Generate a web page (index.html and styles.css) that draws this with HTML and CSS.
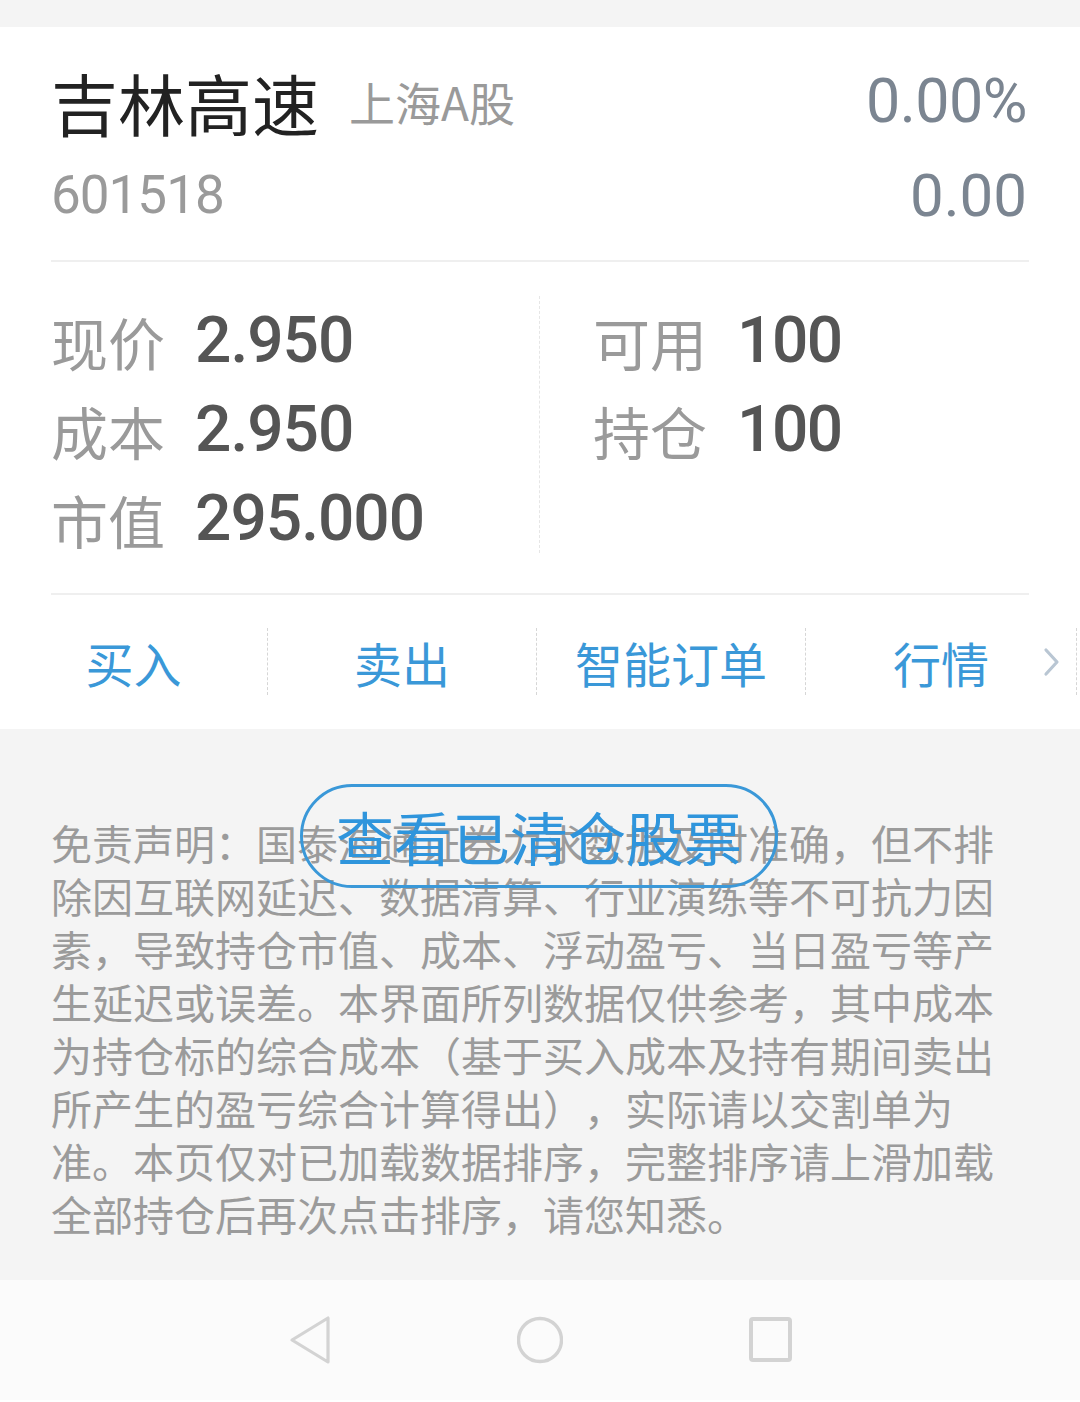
FILE: index.html
```html
<!DOCTYPE html>
<html lang="zh-CN">
<head>
    <meta charset="UTF-8">
    <meta name="viewport" content="width=device-width, initial-scale=1.0">
    <title>持仓详情</title>
    <link rel="stylesheet" href="styles.css">
</head>
<body>
    <div class="top-strip"></div>

    <div class="card">
        <div class="stock-head">
            <div class="head-row">
                <div class="stock-name">吉林高速<span class="market">上海A股</span></div>
                <div class="change-rate">0.00%</div>
            </div>
            <div class="head-row sub">
                <div class="stock-code">601518</div>
                <div class="change-value">0.00</div>
            </div>
        </div>

        <div class="stats">
            <div class="stats-col">
                <p class="stat"><span class="label">现价</span><span class="value">2.950</span></p>
                <p class="stat"><span class="label">成本</span><span class="value">2.950</span></p>
                <p class="stat"><span class="label">市值</span><span class="value">295.000</span></p>
            </div>
            <div class="stats-col right">
                <p class="stat"><span class="label">可用</span><span class="value">100</span></p>
                <p class="stat"><span class="label">持仓</span><span class="value">100</span></p>
            </div>
        </div>

        <div class="actions">
            <div class="action">买入</div>
            <div class="action">卖出</div>
            <div class="action">智能订单</div>
            <div class="action last">行情
                <svg class="chevron" width="18" height="30" viewBox="0 0 18 30">
                    <path d="M3 3 L14 15 L3 27" fill="none" stroke="#b9c6d3" stroke-width="3.2" stroke-linecap="round" stroke-linejoin="round"/>
                </svg>
            </div>
        </div>
    </div>

    <div class="disclaimer">
        <p class="disclaimer-text">免责声明：国泰海通证券力求数据及时准确，但不排除因互联网延迟、数据清算、行业演练等不可抗力因素，导致持仓市值、成本、浮动盈亏、当日盈亏等产生延迟或误差。本界面所列数据仅供参考，其中成本为持仓标的综合成本（基于买入成本及持有期间卖出所产生的盈亏综合计算得出），实际请以交割单为准。本页仅对已加载数据排序，完整排序请上滑加载全部持仓后再次点击排序，请您知悉。</p>
        <div class="cleared-btn">查看已清仓股票</div>
    </div>

    <div class="nav-bar">
        <svg class="nav-icon" width="46" height="50" viewBox="0 0 46 50">
            <path d="M41 3 L41 47 L5 25 Z" fill="none" stroke="#d3d3d3" stroke-width="3.2" stroke-linejoin="round"/>
        </svg>
        <svg class="nav-icon" width="46" height="50" viewBox="0 0 46 50">
            <circle cx="23" cy="25" r="21.5" fill="none" stroke="#d3d3d3" stroke-width="3.4"/>
        </svg>
        <svg class="nav-icon" width="46" height="50" viewBox="0 0 46 50">
            <rect x="4" y="4" width="39" height="41" rx="2" fill="none" stroke="#d3d3d3" stroke-width="4"/>
        </svg>
    </div>
</body>
</html>
```

FILE: styles.css
```css
body {
    margin: 0;
    width: 1080px;
    font-family: "Noto Sans CJK SC", "Noto Sans", sans-serif;
    background: #fff;
}
p {
    margin: 0;
}
.top-strip {
    height: 27px;
    background: #f4f4f4;
}
.card {
    background: #fff;
}
.stock-head {
    margin: 0 51px;
    padding: 38px 2px 35px 0;
    border-bottom: 2px solid #efefef;
}
.head-row {
    display: flex;
    justify-content: space-between;
    align-items: center;
    height: 72px;
}
.head-row.sub {
    margin-top: 28px;
    height: 60px;
}
.stock-name {
    font-size: 67px;
    color: #222;
    line-height: 72px;
}
.market {
    font-size: 46px;
    color: #9a9a9a;
    margin-left: 30px;
    vertical-align: 10px;
}
.change-rate,
.change-value {
    font-family: Roboto, sans-serif;
    color: #7b8591;
}
.change-rate {
    font-size: 61px;
    letter-spacing: -0.5px;
}
.change-value {
    font-size: 60px;
}
.stock-code {
    font-family: Roboto, sans-serif;
    font-size: 53px;
    color: #9a9a9a;
    letter-spacing: -1px;
}
.stats {
    display: grid;
    grid-template-columns: 488px 1fr;
    margin: 0 51px;
    padding: 34px 0 30px;
    border-bottom: 2px solid #efefef;
}
.stats-col.right {
    border-left: 1px dashed #e6e6e6;
    padding-left: 53px;
    margin-bottom: 10px;
}
.stat {
    display: flex;
    align-items: center;
    height: 89px;
}
.label {
    font-size: 57px;
    color: #9a9a9a;
    margin-right: 30px;
}
.value {
    font-family: Roboto, sans-serif;
    font-size: 64px;
    font-weight: 500;
    color: #555;
    letter-spacing: -1px;
}
.stats-col.right .value {
    letter-spacing: -1.5px;
}
.actions {
    display: grid;
    grid-template-columns: 268px 269px 269px 271px;
    padding: 33px 0 34px;
}
.action {
    position: relative;
    height: 67px;
    border-right: 1px dashed #d6d6d6;
    display: flex;
    align-items: center;
    justify-content: center;
    font-size: 48px;
    color: #3a98d8;
}
.chevron {
    position: absolute;
    right: 15px;
    top: 19px;
}
.disclaimer {
    position: relative;
    background: #f4f4f4;
    padding: 87px 53px 40px 51px;
}
.disclaimer-text {
    width: 944px;
    font-size: 41px;
    line-height: 53px;
    color: #9b9b9b;
    text-spacing-trim: space-all;
}
.cleared-btn {
    position: absolute;
    left: 300px;
    top: 55px;
    width: 472px;
    height: 98px;
    border: 3px solid #3a98d8;
    border-radius: 52px;
    display: flex;
    align-items: center;
    justify-content: center;
    font-size: 58px;
    color: #2f95dc;
}
.nav-bar {
    height: 120px;
    background: #fbfbfb;
    display: flex;
    justify-content: center;
    align-items: center;
    gap: 184px;
}
```
